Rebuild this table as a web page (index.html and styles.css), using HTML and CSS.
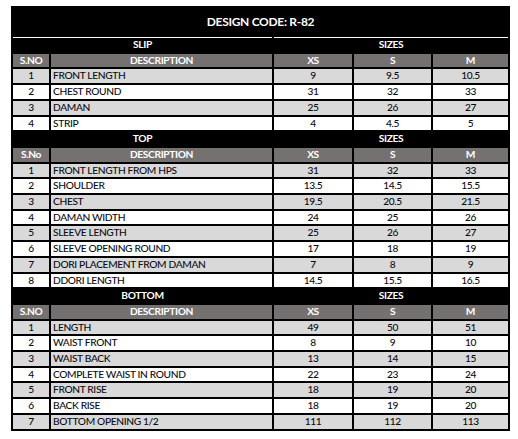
FILE: index.html
```html
<!DOCTYPE html>
<html>
<head>
<meta charset="utf-8">
<link rel="stylesheet" href="styles.css">
</head>
<body>
<div class="sheet">
  <div class="title">DESIGN CODE: R-82</div>
  <table class="grid">
    <colgroup>
      <col class="c-no"><col class="c-desc"><col class="c-xs"><col class="c-s"><col class="c-m">
    </colgroup>
    <tbody>
      <tr class="section first"><td colspan="2">SLIP</td><td colspan="3">SIZES</td></tr>
      <tr class="head"><td>S.NO</td><td>DESCRIPTION</td><td>XS</td><td>S</td><td>M</td></tr>
      <tr class="odd"><td>1</td><td class="desc">FRONT LENGTH</td><td>9</td><td>9.5</td><td>10.5</td></tr>
      <tr class="even"><td>2</td><td class="desc">CHEST ROUND</td><td>31</td><td>32</td><td>33</td></tr>
      <tr class="odd"><td>3</td><td class="desc">DAMAN</td><td>25</td><td>26</td><td>27</td></tr>
      <tr class="even"><td>4</td><td class="desc">STRIP</td><td>4</td><td>4.5</td><td>5</td></tr>

      <tr class="section"><td colspan="2">TOP</td><td colspan="3">SIZES</td></tr>
      <tr class="head"><td>S.No</td><td>DESCRIPTION</td><td>XS</td><td>S</td><td>M</td></tr>
      <tr class="odd"><td>1</td><td class="desc">FRONT LENGTH FROM HPS</td><td>31</td><td>32</td><td>33</td></tr>
      <tr class="even"><td>2</td><td class="desc">SHOULDER</td><td>13.5</td><td>14.5</td><td>15.5</td></tr>
      <tr class="odd"><td>3</td><td class="desc">CHEST</td><td>19.5</td><td>20.5</td><td>21.5</td></tr>
      <tr class="even"><td>4</td><td class="desc">DAMAN WIDTH</td><td>24</td><td>25</td><td>26</td></tr>
      <tr class="odd"><td>5</td><td class="desc">SLEEVE LENGTH</td><td>25</td><td>26</td><td>27</td></tr>
      <tr class="even"><td>6</td><td class="desc">SLEEVE OPENING ROUND</td><td>17</td><td>18</td><td>19</td></tr>
      <tr class="odd"><td>7</td><td class="desc">DORI PLACEMENT FROM DAMAN</td><td>7</td><td>8</td><td>9</td></tr>
      <tr class="even"><td>8</td><td class="desc">DDORI LENGTH</td><td>14.5</td><td>15.5</td><td>16.5</td></tr>

      <tr class="section"><td colspan="2">BOTTOM</td><td colspan="3">SIZES</td></tr>
      <tr class="head"><td>S.NO</td><td>DESCRIPTION</td><td>XS</td><td>S</td><td>M</td></tr>
      <tr class="odd"><td>1</td><td class="desc">LENGTH</td><td>49</td><td>50</td><td>51</td></tr>
      <tr class="even"><td>2</td><td class="desc">WAIST FRONT</td><td>8</td><td>9</td><td>10</td></tr>
      <tr class="odd"><td>3</td><td class="desc">WAIST BACK</td><td>13</td><td>14</td><td>15</td></tr>
      <tr class="even"><td>4</td><td class="desc">COMPLETE WAIST IN ROUND</td><td>22</td><td>23</td><td>24</td></tr>
      <tr class="odd"><td>5</td><td class="desc">FRONT RISE</td><td>18</td><td>19</td><td>20</td></tr>
      <tr class="even"><td>6</td><td class="desc">BACK RISE</td><td>18</td><td>19</td><td>20</td></tr>
      <tr class="odd"><td>7</td><td class="desc">BOTTOM OPENING 1/2</td><td>111</td><td>112</td><td>113</td></tr>
    </tbody>
  </table>
</div>
</body>
</html>
```

FILE: styles.css
```css
html, body {
  margin: 0;
  padding: 0;
  background: #ffffff;
}

body {
  font-family: Lato, "Liberation Sans", sans-serif;
  color: #0c0c14;
}

.sheet {
  width: 499px;
  margin: 6px 0 0 11px;
  background: #000000;
}

.title {
  height: 29px;
  line-height: 31px;
  text-align: center;
  color: #ffffff;
  font-weight: bold;
  font-size: 12px;
  letter-spacing: -0.3px;
}

.grid {
  width: 499px;
  border-collapse: separate;
  border-spacing: 2px;
  table-layout: fixed;
  font-size: 10.2px;
}

.c-no { width: 36px; }
.c-desc { width: 221px; }
.c-xs { width: 78px; }
.c-s { width: 77px; }
.c-m { width: 75px; }

.grid td {
  height: 13.7px;
  padding: 0;
  line-height: 13.7px;
  text-align: center;
  white-space: nowrap;
  overflow: hidden;
  letter-spacing: -0.35px;
  font-weight: 500;
}

.grid td.desc {
  text-align: left;
  padding-left: 2px;
}

.section td {
  background: #000000;
  color: #ffffff;
  font-weight: bold;
}

.section.first td {
  border-top: 1px solid #ffffff;
  height: 12.7px;
}

.head td {
  background: #767171;
  color: #ffffff;
  font-weight: bold;
}

.odd td {
  background: #d9d9d9;
}

.even td {
  background: #ffffff;
}
```
